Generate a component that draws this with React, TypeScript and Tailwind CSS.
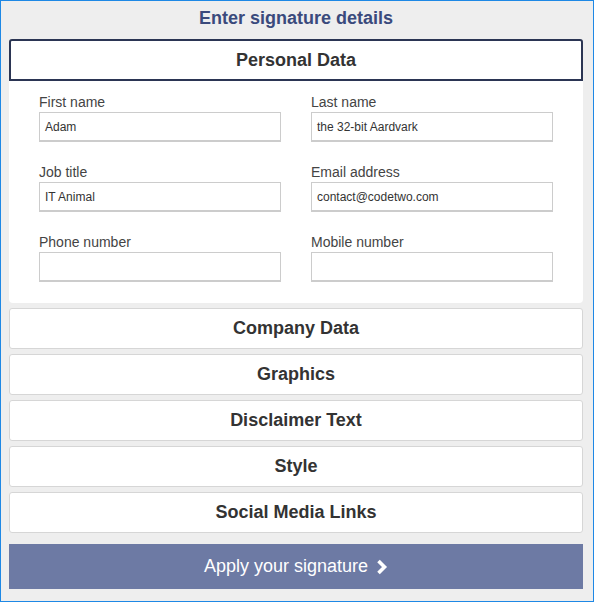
import React from "react";

const fields: [string, string][] = [
  ["First name", "Adam"],
  ["Last name", "the 32-bit Aardvark"],
  ["Job title", "IT Animal"],
  ["Email address", "contact@codetwo.com"],
  ["Phone number", ""],
  ["Mobile number", ""],
];

const sections = ["Company Data", "Graphics", "Disclaimer Text", "Style", "Social Media Links"];

export default function App() {
  return (
    <div
      className="w-[594px] h-[602px] border border-[#1e88e5] bg-[#eeeeee] pl-2 pr-[10px] flex flex-col"
      style={{ fontFamily: '"Liberation Sans", Arial, sans-serif' }}
    >
      <div className="h-[38px] pt-[6px] text-center text-[18px] leading-[22px] font-bold text-[#3a4a7c]">
        Enter signature details
      </div>
      <div className="h-[42px] border-2 border-[#2b3553] rounded-t-[3px] bg-white flex items-center justify-center text-[18px] font-bold text-[#333333]">
        Personal Data
      </div>
      <div className="h-[222px] bg-white rounded-b-[4px] px-[30px] pt-[12px] grid grid-cols-2 gap-x-[30px] gap-y-[21px] content-start">
        {fields.map(([label, value]) => (
          <div key={label} className="flex flex-col">
            <div className="h-[18px] text-[14px] leading-[18px] text-[#444444]">{label}</div>
            <div className="mt-[1px] h-[30px] border border-[#cccccc] border-b-2 bg-white flex items-center pl-[5px] text-[12px] text-[#333333]">
              {value}
            </div>
          </div>
        ))}
      </div>
      <div className="mt-[5px] flex flex-col gap-[5px]">
        {sections.map((s) => (
          <div
            key={s}
            className="h-[41px] border border-[#d6d6d6] rounded-[3px] bg-white flex items-center justify-center text-[18px] font-bold text-[#333333]"
          >
            {s}
          </div>
        ))}
      </div>
      <div className="mt-[11px] h-[45px] bg-[#6d7aa4] flex items-center justify-center gap-[7px] text-white text-[18px]">
        <span>Apply your signature</span>
        <svg width="13" height="16" viewBox="0 0 13 16">
          <polyline points="3.5,2 9.5,8 3.5,14" fill="none" stroke="white" strokeWidth="3.6" strokeLinejoin="miter" />
        </svg>
      </div>
    </div>
  );
}
